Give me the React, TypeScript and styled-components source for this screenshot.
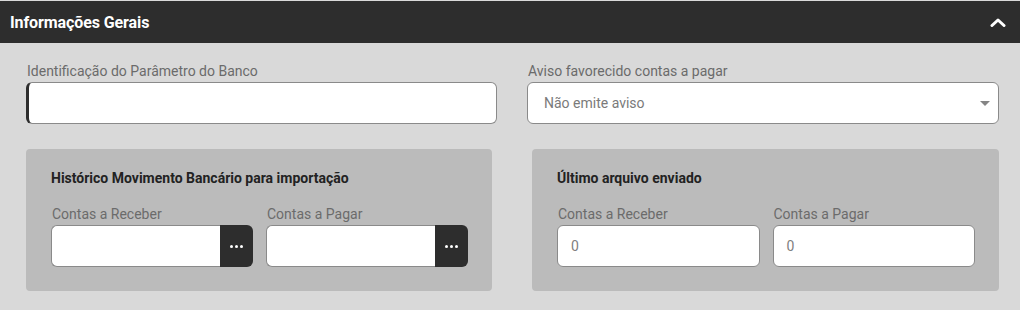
import React from "react";
import styled, { createGlobalStyle } from "styled-components";

const Global = createGlobalStyle`
  html, body { margin: 0; padding: 0; background: #d9d9d9; }
  body { font-family: Roboto, "Liberation Sans", sans-serif; }
  * { box-sizing: border-box; }
`;

const Page = styled.div`
  width: 1020px;
  height: 310px;
  background: #d9d9d9;
  padding-top: 1px;
`;

const Header = styled.div`
  height: 42px;
  background: #2d2d2d;
  display: flex;
  align-items: center;
  justify-content: space-between;
  padding: 0 14px 0 10px;
`;

const HeaderTitle = styled.span`
  color: #fff;
  font-weight: 700;
  font-size: 16px;
  letter-spacing: -0.1px;
`;

const Body = styled.div`
  padding: 20px 21px 0 26px;
  display: grid;
  grid-template-columns: 471px 472px;
  column-gap: 30px;
`;

const Field = styled.div`
  display: flex;
  flex-direction: column;
`;

const Label = styled.label`
  font-size: 14px;
  color: #6b6b6b;
  line-height: 16px;
  margin-bottom: 3px;
  padding-left: 1px;
`;

const TextInput = styled.div<{ $accent?: boolean }>`
  height: 42px;
  background: #fff;
  border: 1px solid #8a8a8a;
  border-left: ${(p) => (p.$accent ? "3px solid #2d2d2d" : "1px solid #8a8a8a")};
  border-radius: 6px;
  display: flex;
  align-items: center;
  padding-left: 16px;
  font-size: 14px;
  color: #7a7a7a;
  position: relative;
`;

const Caret = styled.span`
  position: absolute;
  right: 8px;
  top: 18px;
  width: 0;
  height: 0;
  border-left: 5px solid transparent;
  border-right: 5px solid transparent;
  border-top: 5px solid #858585;
`;

const PanelRow = styled.div`
  grid-column: 1 / span 2;
  display: grid;
  grid-template-columns: 466px 467px;
  column-gap: 40px;
  margin-top: 25px;
`;

const Panel = styled.div`
  background: #bbbbbb;
  border-radius: 4px;
  height: 142px;
  padding: 21px 24px 0 25px;
`;

const PanelTitle = styled.div`
  font-size: 14px;
  font-weight: 700;
  color: #222;
  line-height: 16px;
  margin-bottom: 20px;
`;

const PairGrid = styled.div`
  display: grid;
  grid-template-columns: 1fr 1fr;
  column-gap: 13px;
`;

const Lookup = styled.div`
  display: flex;
  height: 42px;
`;

const LookupInput = styled.div`
  flex: 1;
  background: #fff;
  border: 1px solid #8a8a8a;
  border-right: none;
  border-radius: 6px 0 0 6px;
`;

const LookupButton = styled.div`
  width: 33px;
  background: #2d2d2d;
  border-radius: 0 6px 6px 0;
  display: flex;
  align-items: center;
  justify-content: center;
  gap: 2px;
`;

const Dot = styled.span`
  width: 3px;
  height: 3px;
  border-radius: 50%;
  background: #fff;
`;

const ValueInput = styled(TextInput)`
  padding-left: 13px;
  color: #808080;
`;

const Chevron = () => (
  <svg width="16" height="10" viewBox="0 0 16 10">
    <polyline points="2,8.5 8,3 14,8.5" fill="none" stroke="#fff" strokeWidth="3" strokeLinecap="round" strokeLinejoin="round" />
  </svg>
);

const LookupField = ({ label }: { label: string }) => (
  <Field>
    <Label>{label}</Label>
    <Lookup>
      <LookupInput />
      <LookupButton>
        <Dot />
        <Dot />
        <Dot />
      </LookupButton>
    </Lookup>
  </Field>
);

const ValueField = ({ label, value }: { label: string; value: string }) => (
  <Field>
    <Label>{label}</Label>
    <ValueInput>{value}</ValueInput>
  </Field>
);

export default function App() {
  return (
    <Page>
      <Global />
      <Header>
        <HeaderTitle>Informações Gerais</HeaderTitle>
        <Chevron />
      </Header>
      <Body>
        <Field>
          <Label>Identificação do Parâmetro do Banco</Label>
          <TextInput $accent />
        </Field>
        <Field>
          <Label>Aviso favorecido contas a pagar</Label>
          <TextInput>
            Não emite aviso
            <Caret />
          </TextInput>
        </Field>
        <PanelRow>
          <Panel>
            <PanelTitle>Histórico Movimento Bancário para importação</PanelTitle>
            <PairGrid>
              <LookupField label="Contas a Receber" />
              <LookupField label="Contas a Pagar" />
            </PairGrid>
          </Panel>
          <Panel>
            <PanelTitle>Último arquivo enviado</PanelTitle>
            <PairGrid>
              <ValueField label="Contas a Receber" value="0" />
              <ValueField label="Contas a Pagar" value="0" />
            </PairGrid>
          </Panel>
        </PanelRow>
      </Body>
    </Page>
  );
}
